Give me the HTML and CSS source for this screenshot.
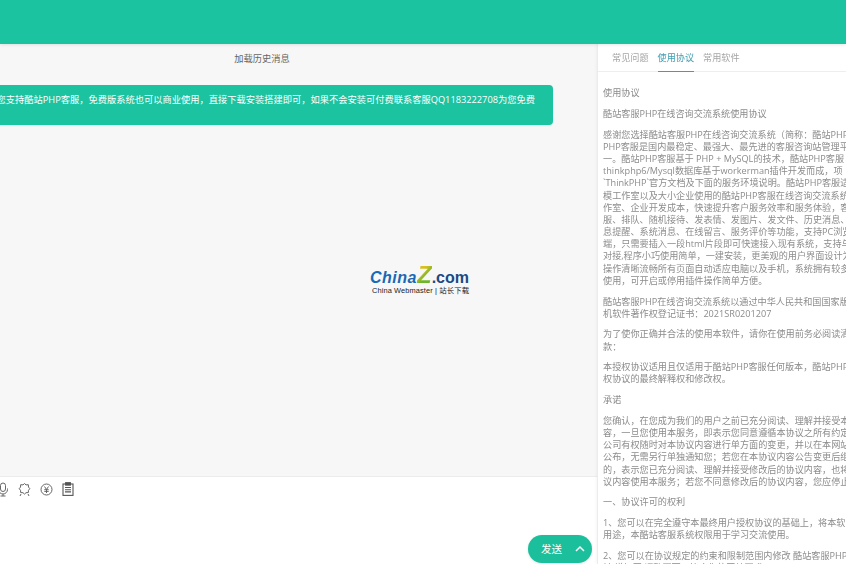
FILE: index.html
```html
<!DOCTYPE html>
<html lang="zh-CN">
<head>
<meta charset="utf-8">
<title>酷站PHP客服</title>
<link rel="stylesheet" href="styles.css">
</head>
<body>
<div class="page">
  <header class="topbar"></header>
  <main class="main">
    <section class="chat">
      <div class="history">加载历史消息</div>
      <div class="messages">
        <div class="bubble">感谢您支持酷站PHP客服，免费版系统也可以商业使用，直接下载安装搭建即可，如果不会安装可付费联系客服QQ1183222708为您免费</div>
        <div class="logo">
          <div class="logo-main"><span class="logo-china">China</span><span class="logo-z">Z</span><span class="logo-com">.com</span></div>
          <div class="logo-sub">China Webmaster | 站长下载</div>
        </div>
      </div>
      <div class="composer">
        <div class="tools">
          <svg class="tool" width="12" height="15" viewBox="0 0 12 15" fill="none" stroke="#666" stroke-width="1"><rect x="3.5" y="1" width="5" height="8.5" rx="2.5"/><path d="M1.5 6.5v1a4.5 4.5 0 0 0 9 0v-1M6 12v2M3.5 14h5"/></svg>
          <svg class="tool" width="13" height="15" viewBox="0 0 13 15" fill="none" stroke="#666" stroke-width="1"><path d="M6.5 1.5l1.5 1.4 2.3-.2.2 2.4 1.3 1.6-1.3 1.6-.2 2.3-2.3.1-1.5 1.4-1.5-1.4-2.3-.1-.2-2.3L1.2 6.7l1.3-1.6.2-2.4 2.3.2z"/><path d="M3 12l-1 2M10 12l1 2"/></svg>
          <svg class="tool" width="13" height="13" viewBox="0 0 13 13" fill="none" stroke="#666" stroke-width="1"><circle cx="6.5" cy="6.5" r="5.5"/><path d="M4.5 3.5l2 3 2-3M4.3 6.7h4.4M4.3 8.4h4.4M6.5 6.5v3.5"/></svg>
          <svg class="tool" width="12" height="14" viewBox="0 0 12 14" fill="none" stroke="#555" stroke-width="1.1"><rect x="1" y="2" width="10" height="11.4"/><rect x="3.6" y="0.7" width="4.8" height="2.4" fill="#555"/><path d="M3 5.5h6M3 7.7h6M3 9.9h6"/></svg>
        </div>
        <button class="send" type="button"><span>发送</span><svg width="10" height="7" viewBox="0 0 10 7" fill="none" stroke="#fff" stroke-width="1.5"><path d="M1 6l4-4 4 4"/></svg></button>
      </div>
    </section>
    <aside class="side">
      <nav class="tabs">
        <a class="tab">常见问题</a>
        <a class="tab tab-active">使用协议</a>
        <a class="tab">常用软件</a>
      </nav>
      <article class="agreement">
        <p>使用协议</p>
        <p>酷站客服PHP在线咨询交流系统使用协议</p>
        <p>感谢您选择酷站客服PHP在线咨询交流系统（简称：酷站PHP<br>PHP客服是国内最稳定、最强大、最先进的客服咨询站管理平<br>一。酷站PHP客服基于 PHP + MySQL的技术，酷站PHP客服<br>thinkphp6/Mysql数据库基于workerman插件开发而成，项<br>`ThinkPHP`官方文档及下面的服务环境说明。酷站PHP客服适<br>模工作室以及大小企业使用的酷站PHP客服在线咨询交流系统<br>作室、企业开发成本，快速提升客户服务效率和服务体验，客<br>服、排队、随机接待、发表情、发图片、发文件、历史消息、<br>息提醒、系统消息、在线留言、服务评价等功能，支持PC浏览<br>端，只需要插入一段html片段即可快速接入现有系统，支持与<br>对接,程序小巧使用简单，一建安装，更美观的用户界面设计为<br>操作清晰流畅所有页面自动适应电脑以及手机，系统拥有较多<br>使用，可开启或停用插件操作简单方便。</p>
        <p>酷站客服PHP在线咨询交流系统以通过中华人民共和国国家版<br>机软件著作权登记证书：2021SR0201207</p>
        <p>为了使你正确并合法的使用本软件，请你在使用前务必阅读清<br>款：</p>
        <p>本授权协议适用且仅适用于酷站PHP客服任何版本，酷站PHP<br>权协议的最终解释权和修改权。</p>
        <p>承诺</p>
        <p>您确认，在您成为我们的用户之前已充分阅读、理解并接受本<br>容，一旦您使用本服务，即表示您同意遵循本协议之所有约定<br>公司有权随时对本协议内容进行单方面的变更，并以在本网站<br>公布，无需另行单独通知您；若您在本协议内容公告变更后继<br>的，表示您已充分阅读、理解并接受修改后的协议内容，也将<br>议内容使用本服务；若您不同意修改后的协议内容，您应停止</p>
        <p>一、协议许可的权利</p>
        <p>1、您可以在完全遵守本最终用户授权协议的基础上，将本软<br>用途，本酷站客服系统权限用于学习交流使用。</p>
        <p>2、您可以在协议规定的约束和限制范围内修改 酷站客服PHP<br>址,增加网,调整页面以符合您的网站要求。</p>
      </article>
    </aside>
  </main>
</div>
</body>
</html>
```
FILE: styles.css
```css
* { box-sizing: border-box; }
html, body { margin: 0; height: 100%; overflow: hidden; background: #fff; }
body { font-family: "Open Sans", "Noto Sans CJK SC", sans-serif; font-size: 9.25px; }
.page { width: 846px; height: 564px; display: flex; flex-direction: column; overflow: hidden; filter: blur(.3px); }
.topbar { height: 44px; flex: none; background: #1cc3a0; box-shadow: 0 1px 3px rgba(0,0,0,.1); position: relative; z-index: 2; }
.main { flex: 1; display: flex; min-height: 0; }
.chat { width: 670px; margin-left: -73px; flex: none; display: flex; flex-direction: column; background: #f7f7f7; position: relative; }
.history { height: 41px; flex: none; padding-top: 8px; line-height: 13px; text-align: center; color: #666; }
.messages { flex: 1; min-height: 0; padding-right: 44px; position: relative; }
.bubble { height: 40px; background: #1cc3a0; border-radius: 4px; color: #fff; white-space: nowrap; text-align: right; padding: 7.5px 18px 0 0; line-height: 13px; box-shadow: 0 1px 2px rgba(28,195,160,.12); }
.logo { position: absolute; left: 443px; top: 182px; width: 104px; text-align: left; font-family: "Liberation Sans", "Noto Sans CJK SC", sans-serif; }
.logo-main { font-weight: 700; font-size: 16px; line-height: 18px; height: 18px; white-space: nowrap; }
.logo-china { color: #1b68b4; font-style: italic; letter-spacing: .5px; }
.logo-z { font-size: 24px; line-height: 16px; font-weight: 700; font-style: italic; background: linear-gradient(135deg, #d8c020 35%, #6fb52c 60%); -webkit-background-clip: text; background-clip: text; color: transparent; }
.logo-com { color: #1a4a86; }
.logo-sub { font-size: 7.4px; line-height: 9px; color: #222; white-space: nowrap; letter-spacing: .12px; margin: 1px 0 0 2px; }
.composer { height: 88px; flex: none; background: #fff; border-top: 1px solid #ececec; padding-left: 73px; position: relative; }
.tools { display: flex; align-items: center; height: 24px; margin-left: -3px; gap: 9px; }
.tool { flex: none; }
.send { position: absolute; left: 601px; top: 58px; width: 64px; height: 28px; border: 0; border-radius: 14px; background: #1cbf9b; color: #fff; font: inherit; font-size: 10.5px; display: flex; align-items: center; padding: 0 0 1px 13px; gap: 13px; box-shadow: 0 1px 3px rgba(0,0,0,.1); }
.side { flex: 1; min-width: 0; background: #fff; border-left: 1px solid #ececec; display: flex; flex-direction: column; overflow: hidden; box-shadow: -1px 0 3px rgba(0,0,0,.04); position: relative; }
.tabs { height: 28px; flex: none; display: flex; gap: 9px; padding-left: 14px; border-bottom: 1px solid #eee; font-size: 9.15px; }
.tab { height: 28px; color: #a6a6a6; padding-top: 7px; line-height: 13px; white-space: nowrap; }
.tab-active { color: #3f9fb0; border-bottom: 1px solid #3f9fb0; }
.agreement { padding: 15.3px 0 0 5px; color: #8c8c8c; font-size: 9.15px; line-height: 12.17px; white-space: nowrap; flex: 1; min-height: 0; overflow: hidden; }
.agreement p { margin: 0 0 8.55px; }
```
